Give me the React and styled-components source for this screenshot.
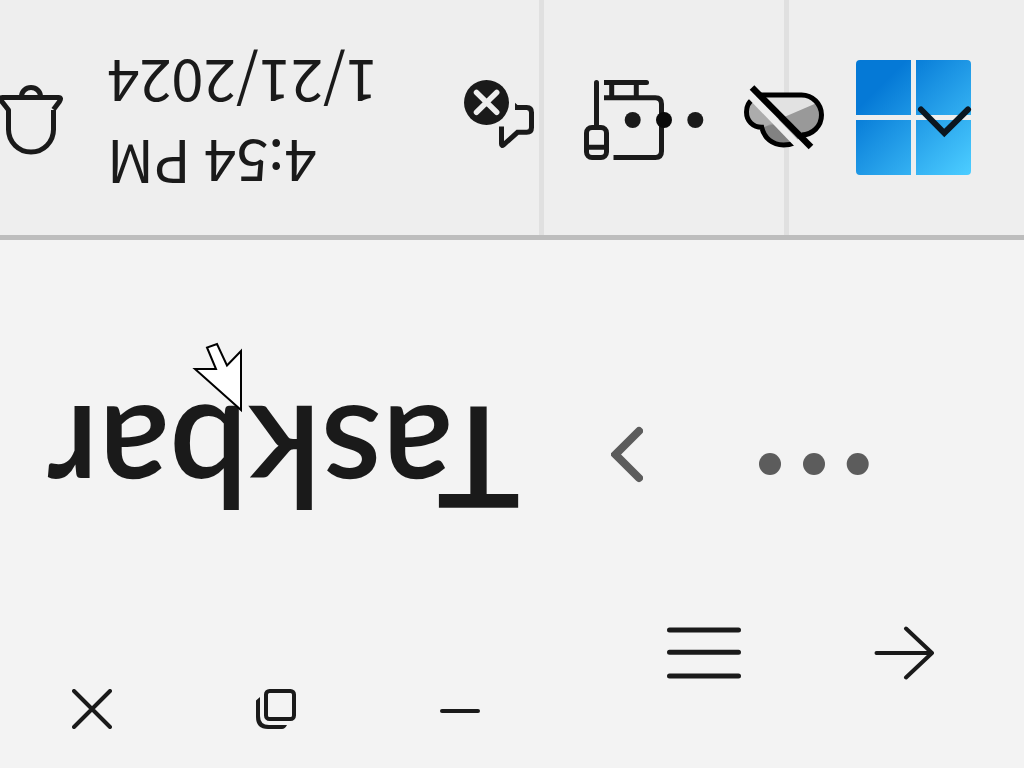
import React from 'react';
import styled, { createGlobalStyle } from 'styled-components';

const GlobalStyle = createGlobalStyle`
    * {
        box-sizing: border-box;
    }
    body {
        margin: 0;
        background: #f3f3f3;
        color: #1a1a1a;
        font-family: "Noto Sans CJK SC", "Noto Sans", sans-serif;
    }
`

const Page = styled.div`
    min-height: 100vh;
    overflow: hidden;
`

const TaskbarStrip = styled.header`
    display: grid;
    grid-template-columns: 544fr 245fr 235fr;
    height: 240px;
    background: #eeeeee;
    border-bottom: 5px solid #bdbdbd;
`

const Section = styled.div`
    position: relative;
    display: flex;
    align-items: center;
    padding-top: 5px;
    padding-left: ${(props) => props.$left || 0}px;
    border-right: ${(props) => (props.$last ? 'none' : '5px solid #e0e0e0')};
`

const IconButton = styled.button`
    display: block;
    flex: none;
    padding: 0;
    border: none;
    background: none;
    color: ${(props) => props.$tone || '#1a1a1a'};
    cursor: pointer;
`

const OverlayButton = styled(IconButton)`
    position: absolute;
    z-index: 1;
    left: ${(props) => props.$x};
    right: ${(props) => props.$right};
    top: 80px;
`

const Icon = styled.svg`
    display: block;
    fill: none;
    stroke: currentColor;
    stroke-width: ${(props) => props.$weight || 5};
`

const Clock = styled.time`
    margin-left: 43px;
    padding-bottom: 10px;
    font-size: 58px;
    line-height: 80px;
    text-align: right;
    white-space: nowrap;
    transform: rotate(180deg);
`

const ClockLine = styled.div``

const ChatSlot = styled.div`
    margin-left: auto;
    margin-right: 5px;
`

const Row = styled.div`
    display: grid;
    grid-template-columns: minmax(0, 544fr) minmax(0, 480fr);
`

const TitleRow = styled(Row)`
    align-items: center;
    padding-top: 150px;
`

const TitleArea = styled.div`
    position: relative;
    display: flex;
    padding-left: 47px;
`

const Title = styled.h1`
    margin: 0;
    font-family: Lato, "Open Sans", sans-serif;
    font-size: 140px;
    font-weight: 600;
    line-height: 140px;
    transform: rotate(180deg);
`

const Pointer = styled.svg`
    position: absolute;
    left: 192px;
    top: -48px;
`

const Actions = styled.nav`
    display: flex;
    align-items: flex-start;
    padding-left: ${(props) => props.$left}px;
    gap: ${(props) => props.$gap}px;
`

const BottomRow = styled(Row)`
    padding-top: 83px;
`

const Captions = styled.div`
    display: flex;
    padding: 76px 0 0 72px;
    gap: 144px;
`

const BinIcon = () => (
    <Icon width="64" height="80" viewBox="0 0 64 80">
        <path d="M21.5 17.5V16.5a9.5 9 0 0 1 19 0V17.5" />
        <path d="M53.5 30V49.5a22.5 22.5 0 0 1-45 0V30L1.5 21Q-1.5 17.5 2.5 17.5H58.5Q62 17.5 59.5 21.5L53.5 29.5" strokeLinejoin="round" />
    </Icon>
)

const ChatIcon = () => (
    <Icon width="70" height="80" viewBox="0 0 70 80">
        <circle cx="22.5" cy="22.5" r="22.5" fill="currentColor" stroke="none" />
        <path d="M12.5 12.5 32.7 32.3M32.7 12.5 12.5 32.3" stroke="#eeeeee" strokeWidth="5.5" strokeLinecap="round" />
        <path d="M51 27.5H62.7Q67.5 27.5 67.5 32.5V47.5Q67.5 52.3 62.7 52.3H53.5L39.5 64.8Q37.5 66.5 37.5 64V46.5" />
        <path d="M51 22.8 54 25.5H51Z" fill="currentColor" stroke="none" />
    </Icon>
)

const NetworkIcon = () => (
    <Icon width="80" height="80" viewBox="0 0 80 80">
        <path d="M12.5 46V2.5" strokeLinecap="round" />
        <rect x="2.5" y="47.5" width="20" height="30" rx="5.5" />
        <path d="M2.5 67.3H22.5M20 2.5H62.5M27.7 2.5V17.5M52.3 2.5V17.5" />
        <circle cx="62.5" cy="2.5" r="2.5" fill="currentColor" stroke="none" />
        <path d="M20 17.7H71.3Q77.5 17.7 77.5 24V71.3Q77.5 77.5 71.3 77.5H29.5" />
    </Icon>
)

const CloudIcon = () => (
    <Icon width="80" height="80" viewBox="0 0 80 80">
        <defs>
            <clipPath id="cloud">
                <path d="M17 15H57.5a20 20 0 0 1 0 40Q51 65 39 65Q24 65 17.5 47.5Q2.5 46 2.5 31Q2.5 18 17 15Z" />
            </clipPath>
        </defs>
        <g clipPath="url(#cloud)" stroke="none">
            <rect width="80" height="80" fill="#e2e2e2" />
            <path d="M0 21 24 44 80 20V80H0Z" fill="#999999" />
            <path d="M0 21H8L36 42Q24 43 17 50L0 60Z" fill="#acacac" />
            <path d="M16 50Q24 44 36 44L62 66V80H16Z" fill="#828282" />
        </g>
        <path d="M14 15H57.5a20 20 0 0 1 0 40M9.5 18.8Q2.5 23 2.5 32C2.5 41 9 47.3 17.7 47.3C20 58 28.5 65 39.5 65Q46 65 52 62.5" />
        <path d="M3 12 59 70" stroke="#eeeeee" strokeWidth="7" />
        <path d="M8 7.5 67 67" strokeWidth="6.5" />
    </Icon>
)

const WindowsLogo = () => (
    <svg width="115" height="120" viewBox="0 0 115 120" display="block">
        <defs>
            <linearGradient id="panes" gradientUnits="userSpaceOnUse" x1="25" y1="25" x2="112" y2="112">
                <stop offset="0" stopColor="#0579d6" />
                <stop offset="1" stopColor="#4acbff" />
            </linearGradient>
        </defs>
        <path
            fill="url(#panes)"
            d="M4 0H55V55H0V4Q0 0 4 0ZM60 0H111Q115 0 115 4V55H60ZM0 60H55V115H4Q0 115 0 111ZM60 60H115V111Q115 115 111 115H60Z"
        />
    </svg>
)

const App = () => {
    return (
        <Page>
            <GlobalStyle />
            <TaskbarStrip>
                <Section>
                    <IconButton aria-label="Recycle bin"><BinIcon /></IconButton>
                    <Clock dateTime="2024-01-21T16:54">
                        <ClockLine>4:54 PM</ClockLine>
                        <ClockLine>1/21/2024</ClockLine>
                    </Clock>
                    <ChatSlot>
                        <IconButton aria-label="Notifications"><ChatIcon /></IconButton>
                    </ChatSlot>
                </Section>
                <Section $left={40}>
                    <IconButton aria-label="Network"><NetworkIcon /></IconButton>
                    <OverlayButton $x="80px" aria-label="More icons">
                        <Icon width="80" height="80" viewBox="0 0 80 80">
                            <g fill="currentColor" stroke="none">
                                <circle cx="8.7" cy="40" r="8" />
                                <circle cx="40" cy="40" r="8" fill="#0a0a0a" />
                                <circle cx="71.3" cy="40" r="8" />
                            </g>
                        </Icon>
                    </OverlayButton>
                    <OverlayButton $right="-40px" $tone="#000000" aria-label="OneDrive"><CloudIcon /></OverlayButton>
                </Section>
                <Section $left={67} $last>
                    <IconButton aria-label="Start"><WindowsLogo /></IconButton>
                    <OverlayButton $x="128px" $tone="#0b1620" aria-label="Show hidden icons">
                        <Icon width="56" height="80" viewBox="0 0 56 80" $weight={6}>
                            <path d="M4 29.5 27.3 53 51 29.5" strokeLinecap="round" />
                        </Icon>
                    </OverlayButton>
                </Section>
            </TaskbarStrip>

            <main>
                <TitleRow>
                    <TitleArea>
                        <Title>Taskbar</Title>
                        <Pointer width="52" height="72" viewBox="0 0 52 72" aria-hidden="true">
                            <path d="M49 9V68L3 27H24L15 5.5 25 2 35 23.5Z" fill="#ffffff" stroke="#000000" strokeWidth="2" />
                        </Pointer>
                    </TitleArea>
                    <Actions $left={67} $gap={116}>
                        <IconButton $tone="#5c5c5c" aria-label="Back">
                            <Icon width="32" height="80" viewBox="0 0 32 80" $weight={8}>
                                <path d="M28 11 4.5 34.5 28 58" strokeLinecap="round" />
                            </Icon>
                        </IconButton>
                        <IconButton $tone="#5c5c5c" aria-label="More">
                            <Icon width="110" height="80" viewBox="0 0 110 80">
                                <g fill="currentColor" stroke="none">
                                    <circle cx="11" cy="44" r="11" />
                                    <circle cx="55" cy="44" r="11" />
                                    <circle cx="98.7" cy="44" r="11" />
                                </g>
                            </Icon>
                        </IconButton>
                    </Actions>
                </TitleRow>

                <BottomRow>
                    <Captions>
                        <IconButton aria-label="Close">
                            <Icon width="40" height="40" viewBox="0 0 40 40" $weight={4}>
                                <path d="M2 2 38 38M38 2 2 38" strokeLinecap="round" />
                            </Icon>
                        </IconButton>
                        <IconButton aria-label="Restore">
                            <Icon width="40" height="40" viewBox="0 0 40 40" $weight={4}>
                                <rect x="10" y="2" width="28" height="28" rx="3.5" />
                                <path d="M0 11.5 4 8V27Q4 36 13 36H31Q29 40 26 40H12Q0 40 0 28Z" fill="currentColor" stroke="none" />
                            </Icon>
                        </IconButton>
                        <IconButton aria-label="Minimize">
                            <Icon width="40" height="40" viewBox="0 0 40 40" $weight={4}>
                                <path d="M2 22H38" strokeLinecap="round" />
                            </Icon>
                        </IconButton>
                    </Captions>
                    <Actions $left={123} $gap={133}>
                        <IconButton aria-label="Menu">
                            <Icon width="74" height="80" viewBox="0 0 74 80">
                                <path d="M2.5 17H71.5M2.5 39.3H71.5M2.5 63H71.5" strokeLinecap="round" />
                            </Icon>
                        </IconButton>
                        <IconButton aria-label="Forward">
                            <Icon width="60" height="80" viewBox="0 0 60 80" $weight={4}>
                                <path d="M2.5 40H58M32 15.5 58 40 32 64.5" strokeLinecap="round" strokeLinejoin="round" />
                            </Icon>
                        </IconButton>
                    </Actions>
                </BottomRow>
            </main>
        </Page>
    );
};

export default App;
